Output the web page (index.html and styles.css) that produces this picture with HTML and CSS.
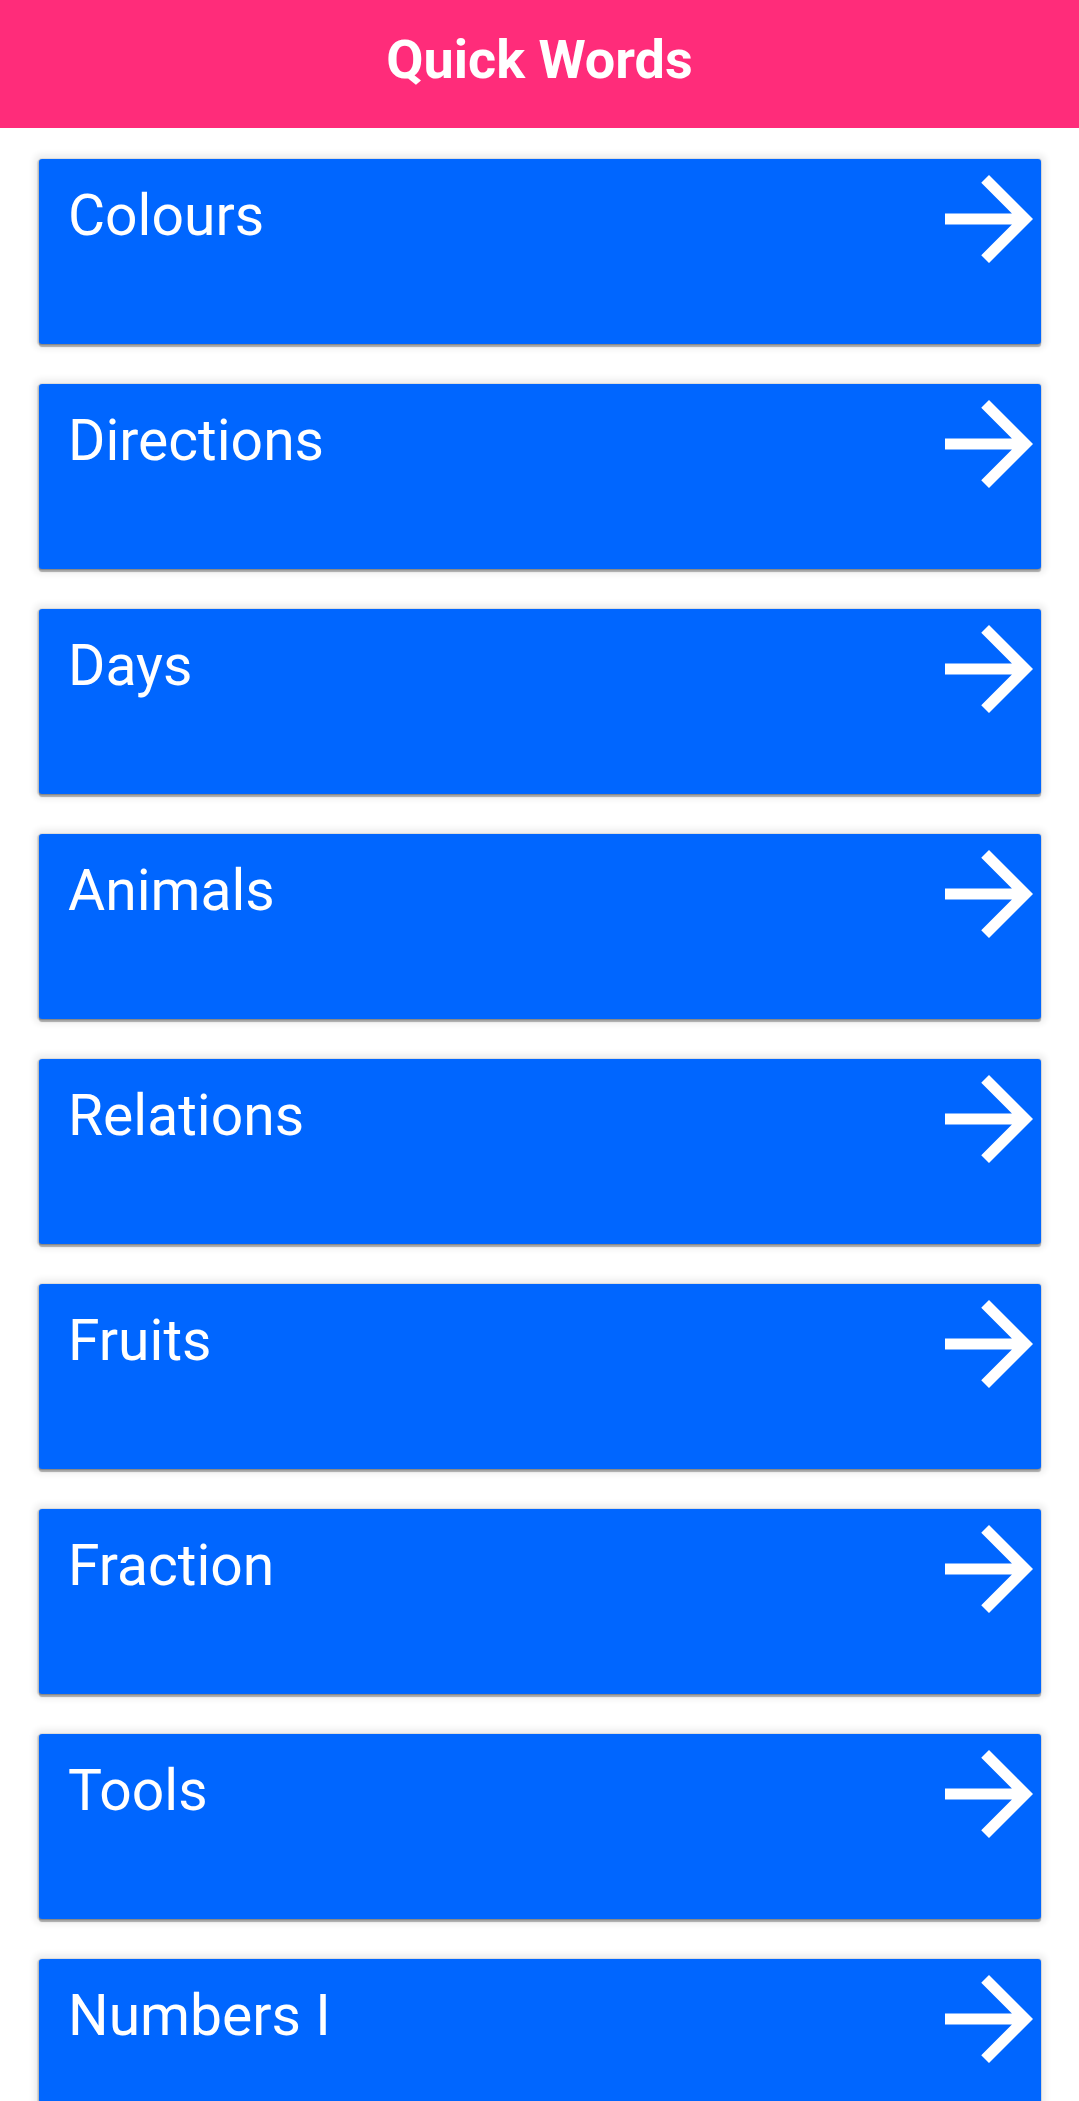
FILE: index.html
```html
<!DOCTYPE html>
<html lang="en">
<head>
	<meta charset="UTF-8">
	<title>Quick Words</title>
	<link rel="stylesheet" href="styles.css">
</head>
<body>
	<div class="top-bar">
		<h1 class="top-title">Quick Words</h1>
	</div>
	<div class="word-list">
		<div class="word-item">
			<p class="word-name">Colours</p>
			<svg class="word-arrow" viewBox="4 4 16 16"><path d="M12 4l-1.41 1.41L16.17 11H4v2h12.17l-5.58 5.59L12 20l8-8z"/></svg>
		</div>
		<div class="word-item">
			<p class="word-name">Directions</p>
			<svg class="word-arrow" viewBox="4 4 16 16"><path d="M12 4l-1.41 1.41L16.17 11H4v2h12.17l-5.58 5.59L12 20l8-8z"/></svg>
		</div>
		<div class="word-item">
			<p class="word-name">Days</p>
			<svg class="word-arrow" viewBox="4 4 16 16"><path d="M12 4l-1.41 1.41L16.17 11H4v2h12.17l-5.58 5.59L12 20l8-8z"/></svg>
		</div>
		<div class="word-item">
			<p class="word-name">Animals</p>
			<svg class="word-arrow" viewBox="4 4 16 16"><path d="M12 4l-1.41 1.41L16.17 11H4v2h12.17l-5.58 5.59L12 20l8-8z"/></svg>
		</div>
		<div class="word-item">
			<p class="word-name">Relations</p>
			<svg class="word-arrow" viewBox="4 4 16 16"><path d="M12 4l-1.41 1.41L16.17 11H4v2h12.17l-5.58 5.59L12 20l8-8z"/></svg>
		</div>
		<div class="word-item">
			<p class="word-name">Fruits</p>
			<svg class="word-arrow" viewBox="4 4 16 16"><path d="M12 4l-1.41 1.41L16.17 11H4v2h12.17l-5.58 5.59L12 20l8-8z"/></svg>
		</div>
		<div class="word-item">
			<p class="word-name">Fraction</p>
			<svg class="word-arrow" viewBox="4 4 16 16"><path d="M12 4l-1.41 1.41L16.17 11H4v2h12.17l-5.58 5.59L12 20l8-8z"/></svg>
		</div>
		<div class="word-item">
			<p class="word-name">Tools</p>
			<svg class="word-arrow" viewBox="4 4 16 16"><path d="M12 4l-1.41 1.41L16.17 11H4v2h12.17l-5.58 5.59L12 20l8-8z"/></svg>
		</div>
		<div class="word-item">
			<p class="word-name">Numbers I</p>
			<svg class="word-arrow" viewBox="4 4 16 16"><path d="M12 4l-1.41 1.41L16.17 11H4v2h12.17l-5.58 5.59L12 20l8-8z"/></svg>
		</div>
	</div>
</body>
</html>
```

FILE: styles.css
```css
* {
	padding: 0;
	margin: 0;
	box-sizing: border-box;
}
html, body {
	width: 100%;
	background: #FFFFFF;
	font-family: Roboto, "Liberation Sans", sans-serif;
	overflow: hidden;
}
.top-bar {
	height: 128px;
	background: #FF2C7A;
	display: flex;
	align-items: center;
	justify-content: center;
	padding-bottom: 10px;
}
.top-title {
	color: #FFFFFF;
	font-size: 54px;
	font-weight: 700;
}
.word-list {
	display: flex;
	flex-direction: column;
	gap: 40px;
	padding: 31px 38px 0 39px;
}
.word-item {
	display: flex;
	align-items: flex-start;
	justify-content: space-between;
	flex-shrink: 0;
	height: 185px;
	background: #0066FF;
	border-radius: 3px;
	box-shadow: 0 3px 1px rgba(0, 0, 0, 0.3), -2px 1px 1px rgba(0, 0, 0, 0.12), 0 0 0 1px rgba(0, 0, 0, 0.08), 0 0 6px 5px rgba(0, 0, 0, 0.07);
}
.word-item .word-name {
	color: #FFFFFF;
	font-size: 57px;
	padding: 23px 0 0 29px;
}
.word-item .word-arrow {
	width: 88px;
	height: 88px;
	margin: 16px 8px 0 0;
	fill: #FFFFFF;
}
```
